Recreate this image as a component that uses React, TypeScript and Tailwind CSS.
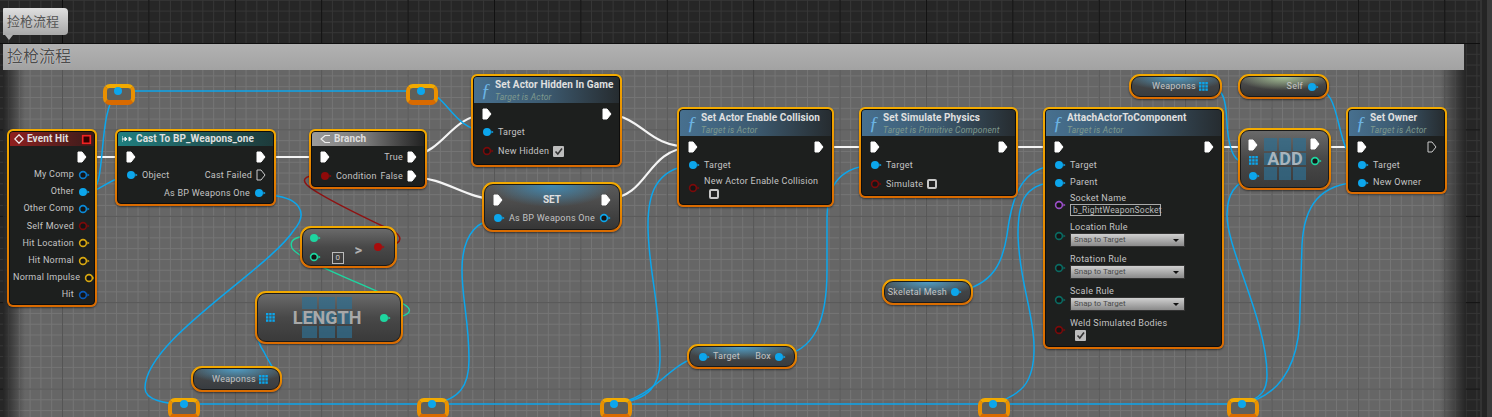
import { ReactNode } from "react";

const BLUE = "#0ca6ec";

type PinKind = "filled" | "ring";

const Pin = ({ color, kind = "filled" }: { color: string; kind?: PinKind }) => (
  <svg width="12" height="12" viewBox="0 0 12 12" className="shrink-0">
    <circle cx="5" cy="6" r={kind === "filled" ? 4 : 3.4} fill={kind === "filled" ? color : "#151515"} stroke={color} strokeWidth={kind === "filled" ? 0 : 1.6} />
    <path d="M9.4 4.6 L11.6 6 L9.4 7.4 Z" fill={color} />
  </svg>
);

const ExecPin = ({ hollow }: { hollow?: boolean }) => (
  <svg width="10" height="12" viewBox="0 0 10 12" className="shrink-0">
    <path d="M1 1 H5 L9 6 L5 11 H1 Z" fill={hollow ? "none" : "#fff"} stroke={hollow ? "#ccc" : "#fff"} strokeWidth="1" />
  </svg>
);

const ArrayPin = ({ color = BLUE }: { color?: string }) => (
  <svg width="9" height="9" viewBox="0 0 9 9" className="shrink-0" fill={color}>
    {[0, 3.2, 6.4].map((y) =>
      [0, 3.2, 6.4].map((x) => <rect key={`${x}-${y}`} x={x} y={y} width="2.4" height="2.4" />),
    )}
  </svg>
);

const Label = ({ children }: { children: ReactNode }) => (
  <span className="whitespace-nowrap text-[9px] leading-none tracking-[0.25px] text-[#c4c4c4]">{children}</span>
);

const CheckBox = ({ checked }: { checked?: boolean }) =>
  checked ? (
    <span className="flex h-[11px] w-[11px] items-center justify-center rounded-[1px] bg-[#bdbdbd]">
      <svg width="9" height="9" viewBox="0 0 9 9">
        <path d="M1.5 4.5 L3.8 7 L8 1.5" fill="none" stroke="#333" strokeWidth="1.6" />
      </svg>
    </span>
  ) : (
    <span className="block h-[10px] w-[10px] rounded-[2px] border-2 border-[#c8c8c8] bg-[#222]" />
  );

const ComboBox = () => (
  <div className="flex h-[14px] w-[115px] items-center justify-between border border-[#333] bg-gradient-to-b from-[#d0d0d0] to-[#8a8a8a] px-[3px]">
    <span className="text-[8px] leading-none text-[#4a4a4a]">Snap to Target</span>
    <span className="mr-[2px] h-0 w-0 border-x-[3px] border-t-[3px] border-x-transparent border-t-[#111]" />
  </div>
);

const Row = ({ left, right, className = "h-[18px]" }: { left?: ReactNode; right?: ReactNode; className?: string }) => (
  <div className={`flex items-center justify-between ${className}`}>
    <div className="flex items-center gap-[4px]">{left}</div>
    <div className="flex items-center gap-[4px]">{right}</div>
  </div>
);

const Frame = ({ className, radius, children }: { className: string; radius: string; children: ReactNode }) => (
  <div className={`absolute bg-gradient-to-b from-[#f3ab00] to-[#d96a00] p-[2px] shadow-[0_1px_2px_rgba(0,0,0,0.5)] ${radius} ${className}`}>
    {children}
  </div>
);

const FuncIcon = () => (
  <span className="mr-[5px] w-[9px] font-['Liberation_Serif'] text-[19px] leading-none italic text-[#6cb4e4]">ƒ</span>
);

const FuncNode = ({ className, title, sub, children }: { className: string; title: string; sub: string; children: ReactNode }) => (
  <Frame className={className} radius="rounded-[6px]">
    <div className="h-full overflow-hidden rounded-[4px] border border-[#0d0d0d] bg-[#1d1f1e]">
      <div className="flex h-[26px] items-center bg-gradient-to-r from-[#47708f] via-[#3c5a70] to-[#262c30] pl-[7px]">
        <FuncIcon />
        <div className="flex flex-col gap-[1px]">
          <span className="whitespace-nowrap text-[10px] leading-[12px] font-bold tracking-[0.1px] text-[#e0e0e0]">{title}</span>
          <span className="whitespace-nowrap text-[8.5px] leading-[10px] tracking-[0.2px] text-[#7f9a8e] italic">{sub}</span>
        </div>
      </div>
      <div className="px-[3px] pt-[2px]">{children}</div>
    </div>
  </Frame>
);

const HeadNode = ({ className, header, icon, title, end, children }: { className: string; header: string; icon: ReactNode; title: string; end?: ReactNode; children: ReactNode }) => (
  <Frame className={className} radius="rounded-[6px]">
    <div className="h-full overflow-hidden rounded-[4px] border border-[#0d0d0d] bg-[#1d1f1e]">
      <div className={`flex h-[14px] items-center gap-[3px] pl-[4px] pr-[2px] ${header}`}>
        {icon}
        <span className="whitespace-nowrap text-[10px] leading-none font-bold tracking-[0.1px] text-[#e0e0e0]">{title}</span>
        {end}
      </div>
      <div className="px-[3px] pt-[2px]">{children}</div>
    </div>
  </Frame>
);

const PureNode = ({ className, inner, children }: { className: string; inner: string; children: ReactNode }) => (
  <Frame className={className} radius="rounded-[11px]">
    <div className={`flex h-full items-center rounded-[9px] border border-[#1a1a1a] ${inner}`}>{children}</div>
  </Frame>
);

const Watermark = ({ className }: { className: string }) => (
  <div className={`grid grid-cols-3 gap-[2px] ${className}`}>
    {Array.from({ length: 9 }).map((_, i) => (
      <span key={i} className="bg-[#2f6f92] opacity-70" />
    ))}
  </div>
);

const GRAY_NODE = "bg-gradient-to-b from-[#6a6a6a] via-[#484848] to-[#3a3a3a]";
const VAR_BLUE = "bg-[radial-gradient(ellipse_60%_70%_at_50%_0%,#4f9cc4,transparent),linear-gradient(#4a4a4a,#383c40)]";

const Knot = ({ className }: { className: string }) => (
  <div className={`absolute h-[21px] w-[32px] rounded-[7px] border-[4px] border-b-[5px] border-t-[#f2aa00] border-x-[#ea9000] border-b-[#d96a00] bg-[#5f5f5a] ${className}`} />
);

const CURVES_BLUE = [
  "M90 192 C108 188 96 112 118 91",
  "M90 192 C100 190 106 182 122 177",
  "M118 91 H421",
  "M421 91 C448 92 450 128 486 132",
  "M265 195 C302 196 308 214 294 230 C268 270 145 340 145 388 C145 400 165 404 184 404",
  "M184 404 H1243",
  "M268 317 C252 320 256 340 264 352 C270 364 276 372 278 378 C276 378 272 378 268 378",
  "M498 218 C466 222 462 250 462 270 C462 300 469 320 469 360 C469 385 460 400 432 404",
  "M690 165 C655 170 648 195 648 225 C648 270 660 300 660 360 C660 385 650 400 614 404",
  "M702 356 C668 362 656 398 614 404",
  "M779 356 C815 352 827 320 827 270 L827 220 C827 190 835 168 872 165",
  "M956 292 C995 285 1003 260 1007 235 C1012 195 1022 168 1056 165",
  "M993 404 C1020 395 1035 385 1034 345 C1033 310 1019 280 1018 235 C1018 205 1022 184 1056 182",
  "M1207 86 C1232 86 1224 120 1229 140 C1232 158 1238 164 1252 163",
  "M1252 179 C1235 181 1227 195 1227 215 C1227 250 1267 320 1267 375 C1267 390 1262 398 1242 404",
  "M1242 404 C1290 394 1300 350 1300 310 L1302 245 C1304 205 1320 184 1360 182",
  "M1313 87 C1345 88 1332 150 1360 165",
];

const CURVES_WHITE = [
  "M83 157 H128",
  "M263 157 H322",
  "M413 156 C445 150 450 118 485 114",
  "M413 177 C445 178 465 198 497 200",
  "M608 114 C645 118 645 146 691 147",
  "M608 199 C650 196 645 150 691 147",
  "M820 147 H873",
  "M1004 147 H1057",
  "M1210 147 H1251",
  "M1317 147 H1360",
];

const Wires = () => (
  <svg width="1492" height="417" fill="none" className="absolute top-0 left-0">
    {CURVES_WHITE.map((d) => (
      <path key={d} d={d} stroke="#f4f4f4" strokeWidth="2.2" />
    ))}
    {CURVES_BLUE.map((d) => (
      <path key={d} d={d} stroke={BLUE} strokeWidth="1.5" />
    ))}
    <path d="M388 317 C405 318 416 312 405 305 C385 292 300 262 292 248 C288 238 300 236 312 236" stroke="#1ed6a0" strokeWidth="1.4" />
    <path d="M312 255 C306 254 302 253 299 250" stroke="#1ed6a0" strokeWidth="1.4" />
    <path d="M322 175 C308 175 300 178 307 185 C320 197 370 220 395 232 C403 238 403 246 380 246" stroke="#8f1212" strokeWidth="1.5" />
  </svg>
);

const App = () => {
  return (
    <div className="flex h-[417px] w-[1492px] overflow-hidden bg-[#262626] [font-family:Roboto,'Noto_Sans_CJK_SC',sans-serif]">
      <div className="relative h-full w-[1480px] shrink-0 overflow-hidden bg-[linear-gradient(90deg,#0f0f0f_1px,transparent_1px),linear-gradient(#0f0f0f_1px,transparent_1px),linear-gradient(90deg,#363636_1px,transparent_1px),linear-gradient(#363636_1px,transparent_1px)] bg-size-[86.4px_86.4px,86.4px_86.4px,10.8px_10.8px,10.8px_10.8px] bg-position-[62px_43px,62px_43px,8px_10.6px,8px_10.6px]">
        {/* comment box */}
        <div className="absolute top-[44px] left-[3px] h-[373px] w-[1463px] bg-[#666] bg-[linear-gradient(90deg,rgba(25,25,25,0.85),transparent_22px),linear-gradient(270deg,rgba(25,25,25,0.85),transparent_26px),linear-gradient(90deg,#555_1px,transparent_1px),linear-gradient(#555_1px,transparent_1px),linear-gradient(90deg,#757575_1px,transparent_1px),linear-gradient(#757575_1px,transparent_1px)] bg-size-[auto,auto,86.4px_86.4px,86.4px_86.4px,10.8px_10.8px,10.8px_10.8px] bg-position-[0_0,0_0,59px_-1px,59px_-1px,5px_-1px,5px_-1px]">
          <div className="flex h-[26px] w-[1461px] items-center bg-gradient-to-b from-[#b2b2b2] to-[#a2a2a2] pl-[4px] text-[16px] leading-none text-[#4c4c4c] [text-shadow:0_0_1px_#eee]">
            捡枪流程
          </div>
        </div>
        {/* comment bubble */}
        <div className="absolute top-[8px] left-[3px] flex h-[27px] w-[65px] items-center rounded-r-[4px] rounded-tl-[1px] bg-gradient-to-b from-[#e0e0e0] to-[#a8a8a8] pl-[4px] text-[13px] leading-none text-[#555]">
          捡枪流程
        </div>
        <div className="absolute top-[35px] left-[5px] h-0 w-0 border-x-[4px] border-t-[5px] border-x-transparent border-t-[#b0b0b0]" />

        <Wires />

        {[ "top-[84px] left-[103px]", "top-[84px] left-[406px]", "top-[398px] left-[168px]", "top-[398px] left-[417px]", "top-[398px] left-[600px]", "top-[398px] left-[978px]", "top-[398px] left-[1227px]" ].map((c) => (
          <Knot key={c} className={c} />
        ))}

        <HeadNode
          className="top-[129px] left-[7px] h-[178px] w-[90px]"
          header="bg-gradient-to-r from-[#8f1f1f] to-[#3a1a1a]"
          title="Event Hit"
          icon={
            <svg width="10" height="10" viewBox="0 0 10 10" className="shrink-0">
              <path d="M5 .8 L9.2 5 L5 9.2 L.8 5 Z" fill="none" stroke="#eee" strokeWidth="1.3" />
            </svg>
          }
          end={<span className="ml-auto h-[7px] w-[7px] border-2 border-[#ee2222] bg-[#300] box-content -translate-x-[0px] scale-[0.85]" />}
        >
          <div className="pr-[1px]">
            <Row className="mb-[1px] h-[17px]" right={<span className="mr-[3px]"><ExecPin /></span>} />
            <Row className="h-[17.2px]" right={<><Label>My Comp</Label><Pin color="#0a7fd0" kind="ring" /></>} />
            <Row className="h-[17.2px]" right={<><Label>Other</Label><Pin color={BLUE} /></>} />
            <Row className="h-[17.2px]" right={<><Label>Other Comp</Label><Pin color="#0a8ad8" kind="ring" /></>} />
            <Row className="h-[17.2px]" right={<><Label>Self Moved</Label><Pin color="#7a0a0a" kind="ring" /></>} />
            <Row className="h-[17.2px]" right={<><Label>Hit Location</Label><Pin color="#d8a810" kind="ring" /></>} />
            <Row className="h-[17.2px]" right={<><Label>Hit Normal</Label><Pin color="#d8a810" kind="ring" /></>} />
            <Row className="h-[17.2px]" right={<><Label>Normal Impulse</Label><Pin color="#d8a810" kind="ring" /></>} />
            <Row className="h-[17.2px]" right={<><Label>Hit</Label><Pin color="#0a5ab8" kind="ring" /></>} />
          </div>
        </HeadNode>

        <HeadNode
          className="top-[129px] left-[115px] h-[77px] w-[161px]"
          header="bg-gradient-to-r from-[#1f7f80] to-[#1d3a3a]"
          title="Cast To BP_Weapons_one"
          icon={
            <svg width="10" height="8" viewBox="0 0 10 8" className="mr-[1px] shrink-0">
              <path d="M0 1 V7 M0 4 H3 M3 2 L5 4 L3 6 Z M9.6 4 L7 2 V6 Z" stroke="#eee" fill="#eee" strokeWidth="1" />
            </svg>
          }
        >
          <div className="pl-[5px] pr-[4px]">
            <Row className="h-[18px]" left={<ExecPin />} right={<ExecPin />} />
            <Row className="h-[18px]" left={<><Pin color={BLUE} /><Label>Object</Label></>} right={<><Label>Cast Failed</Label><ExecPin hollow /></>} />
            <Row className="h-[18px]" right={<><Label>As BP Weapons One</Label><Pin color={BLUE} /></>} />
          </div>
        </HeadNode>

        <HeadNode
          className="top-[129px] left-[309px] h-[60px] w-[118px]"
          header="bg-gradient-to-r from-[#9c9c9c] via-[#777] to-[#222]"
          title="Branch"
          icon={
            <svg width="11" height="10" viewBox="0 0 11 10" className="ml-[4px] shrink-0">
              <path d="M10 1.5 H5 L1 5 L5 8.5 H10" fill="none" stroke="#eee" strokeWidth="1.2" />
            </svg>
          }
        >
          <div className="pl-[5px] pr-[4px]">
            <Row className="h-[18px]" left={<ExecPin />} right={<><Label>True</Label><ExecPin /></>} />
            <Row className="h-[20px]" left={<><Pin color="#8f0a0a" /><Label>Condition</Label></>} right={<><Label>False</Label><ExecPin /></>} />
          </div>
        </HeadNode>

        <FuncNode className="top-[74px] left-[471px] h-[93px] w-[151px]" title="Set Actor Hidden In Game" sub="Target is Actor">
          <div className="pl-[5px] pr-[4px]">
            <Row left={<ExecPin />} right={<ExecPin />} />
            <Row left={<><Pin color={BLUE} /><Label>Target</Label></>} />
            <Row className="mt-[1px] h-[18px]" left={<><Pin color="#7a0a0a" kind="ring" /><Label>New Hidden</Label><CheckBox checked /></>} />
          </div>
        </FuncNode>

        <Frame className="top-[182px] left-[482px] h-[50px] w-[140px]" radius="rounded-[11px]">
          <div className="h-full rounded-[9px] border border-[#1a1a1a] bg-[radial-gradient(ellipse_45%_50%_at_50%_0%,#3f89b3,transparent),linear-gradient(#5a5a5a,#363636)] px-[8px]">
            <div className="flex h-[24px] items-center justify-between pt-[6px]">
              <ExecPin />
              <span className="text-[10px] leading-none font-bold text-[#e0e0e0]">SET</span>
              <ExecPin />
            </div>
            <Row className="mt-[2px] h-[14px]" left={<><Pin color={BLUE} /><Label>As BP Weapons One</Label></>} right={<Pin color={BLUE} kind="ring" />} />
          </div>
        </Frame>

        <FuncNode className="top-[107px] left-[677px] h-[100px] w-[157px]" title="Set Actor Enable Collision" sub="Target is Actor">
          <div className="pl-[5px] pr-[4px]">
            <Row left={<ExecPin />} right={<ExecPin />} />
            <Row left={<><Pin color={BLUE} /><Label>Target</Label></>} />
            <div className="flex gap-[4px] pt-[3px]">
              <span className="mt-[5px]"><Pin color="#7a0a0a" kind="ring" /></span>
              <div className="flex flex-col gap-[3px]">
                <Label>New Actor Enable Collision</Label>
                <span className="ml-[5px]"><CheckBox /></span>
              </div>
            </div>
          </div>
        </FuncNode>

        <FuncNode className="top-[107px] left-[859px] h-[91px] w-[159px]" title="Set Simulate Physics" sub="Target is Primitive Component">
          <div className="pl-[5px] pr-[4px]">
            <Row left={<ExecPin />} right={<ExecPin />} />
            <Row left={<><Pin color={BLUE} /><Label>Target</Label></>} />
            <Row className="mt-[1px] h-[18px]" left={<><Pin color="#7a0a0a" kind="ring" /><Label>Simulate</Label><CheckBox /></>} />
          </div>
        </FuncNode>

        <FuncNode className="top-[107px] left-[1043px] h-[242px] w-[181px]" title="AttachActorToComponent" sub="Target is Actor">
          <div className="pl-[5px] pr-[4px]">
            <Row left={<ExecPin />} right={<ExecPin />} />
            <Row left={<><Pin color={BLUE} /><Label>Target</Label></>} />
            <Row className="h-[17px]" left={<><Pin color={BLUE} /><Label>Parent</Label></>} />
            <div className="mt-[2px] flex h-[29px] gap-[4px]">
              <span className="mt-[6px]"><Pin color="#9a4fc8" kind="ring" /></span>
              <div className="flex flex-col gap-[1px]">
                <span className="flex h-[10px] items-center"><Label>Socket Name</Label></span>
                <span className="flex h-[12px] w-[91px] items-center border border-[#aaa] pl-[2px] text-[8.5px] leading-none tracking-[0.2px] text-[#bbb]">b_RightWeaponSocket</span>
              </div>
            </div>
            {["Location Rule", "Rotation Rule", "Scale Rule"].map((name) => (
              <div key={name} className="flex h-[32px] gap-[4px]">
                <span className="mt-[8px]"><Pin color="#0a6a62" kind="ring" /></span>
                <div className="flex flex-col gap-[1px]">
                  <span className="flex h-[10px] items-center"><Label>{name}</Label></span>
                  <ComboBox />
                </div>
              </div>
            ))}
            <div className="flex gap-[4px]">
              <span className="mt-[6px]"><Pin color="#7a0a0a" kind="ring" /></span>
              <div className="flex flex-col gap-[2px]">
                <span className="flex h-[10px] items-center"><Label>Weld Simulated Bodies</Label></span>
                <span className="ml-[5px]"><CheckBox checked /></span>
              </div>
            </div>
          </div>
        </FuncNode>

        <FuncNode className="top-[107px] left-[1346px] h-[87px] w-[101px]" title="Set Owner" sub="Target is Actor">
          <div className="pl-[5px] pr-[4px]">
            <Row left={<ExecPin />} right={<ExecPin hollow />} />
            <Row left={<><Pin color={BLUE} /><Label>Target</Label></>} />
            <Row className="h-[17px]" left={<><Pin color={BLUE} /><Label>New Owner</Label></>} />
          </div>
        </FuncNode>

        <PureNode className="top-[226px] left-[300px] h-[42px] w-[97px]" inner={`${GRAY_NODE} justify-between pl-[6px] pr-[9px]`}>
          <div className="flex flex-col gap-[7px]">
            <Pin color="#1ed6a0" />
            <Pin color="#1ed6a0" kind="ring" />
          </div>
          <span className="mt-[22px] flex h-[12px] w-[12px] items-center justify-center border border-[#bbb] text-[8px] leading-none text-[#ccc]">0</span>
          <span className="mt-[6px] text-[15px] leading-none font-bold text-[#b0b0b0]">&gt;</span>
          <Pin color="#a80c0c" />
        </PureNode>

        <PureNode className="top-[291px] left-[255px] h-[53px] w-[148px]" inner={`${GRAY_NODE} justify-between pl-[8px] pr-[9px]`}>
          <ArrayPin />
          <div className="relative flex h-[41px] w-[58px] items-center justify-center">
            <Watermark className="absolute inset-x-[4px] inset-y-0" />
            <span className="relative text-[18px] leading-none font-bold text-[#a8a8a8]">LENGTH</span>
          </div>
          <Pin color="#1ed6a0" />
        </PureNode>

        <PureNode className="top-[128px] left-[1238px] h-[62px] w-[93px]" inner={`${GRAY_NODE} justify-between pl-[7px] pr-[6px]`}>
          <div className="flex flex-col items-start gap-[5px] pt-[3px]">
            <ExecPin />
            <span className="ml-[1px]"><ArrayPin /></span>
            <Pin color={BLUE} />
          </div>
          <div className="relative flex h-[42px] w-[42px] items-center justify-center">
            <Watermark className="absolute inset-0" />
            <span className="relative text-[18px] leading-none font-bold text-[#a8b4bc]">ADD</span>
          </div>
          <div className="flex flex-col items-start gap-[5px] pb-[13px]">
            <ExecPin />
            <Pin color="#1ed6a0" kind="ring" />
          </div>
        </PureNode>

        <PureNode className="top-[74px] left-[1129px] h-[25px] w-[93px]" inner={`${VAR_BLUE} justify-end gap-[3px] pr-[11px]`}>
          <Label>Weaponss</Label>
          <ArrayPin />
        </PureNode>

        <PureNode className="top-[366px] left-[191px] h-[26px] w-[91px]" inner={`${VAR_BLUE} justify-end gap-[3px] pr-[11px]`}>
          <Label>Weaponss</Label>
          <ArrayPin />
        </PureNode>

        <PureNode className="top-[279px] left-[882px] h-[26px] w-[91px]" inner={`${VAR_BLUE} justify-end gap-[3px] pr-[8px]`}>
          <Label>Skeletal Mesh</Label>
          <Pin color={BLUE} />
        </PureNode>

        <PureNode className="top-[74px] left-[1238px] h-[25px] w-[91px]" inner="bg-[radial-gradient(ellipse_55%_70%_at_50%_0%,#a4bf94,transparent),linear-gradient(#555,#333)] justify-end gap-[4px] pr-[7px]">
          <Label>Self</Label>
          <Pin color={BLUE} />
        </PureNode>

        <PureNode className="top-[344px] left-[687px] h-[25px] w-[110px]" inner={`${VAR_BLUE} justify-between pl-[8px] pr-[8px]`}>
          <div className="flex items-center gap-[3px]">
            <Pin color={BLUE} />
            <Label>Target</Label>
          </div>
          <div className="flex items-center gap-[3px]">
            <Label>Box</Label>
            <Pin color={BLUE} />
          </div>
        </PureNode>

        {/* reroute pins sit on top of their rings */}
        {[ "top-[87px] left-[114px]", "top-[87px] left-[417px]", "top-[400px] left-[180px]", "top-[400px] left-[428px]", "top-[400px] left-[610px]", "top-[400px] left-[989px]", "top-[400px] left-[1238px]" ].map((c) => (
          <span key={c} className={`absolute h-[8px] w-[8px] rounded-full bg-[#0ca6ec] ${c}`} />
        ))}
      </div>
      <div className="h-full w-[2px] shrink-0 bg-[#333]" />
      <div className="h-full w-[5px] shrink-0 bg-[#242424]" />
      <div className="h-full w-[5px] shrink-0 bg-[#3a3a3a]" />
    </div>
  );
};

export default App;
